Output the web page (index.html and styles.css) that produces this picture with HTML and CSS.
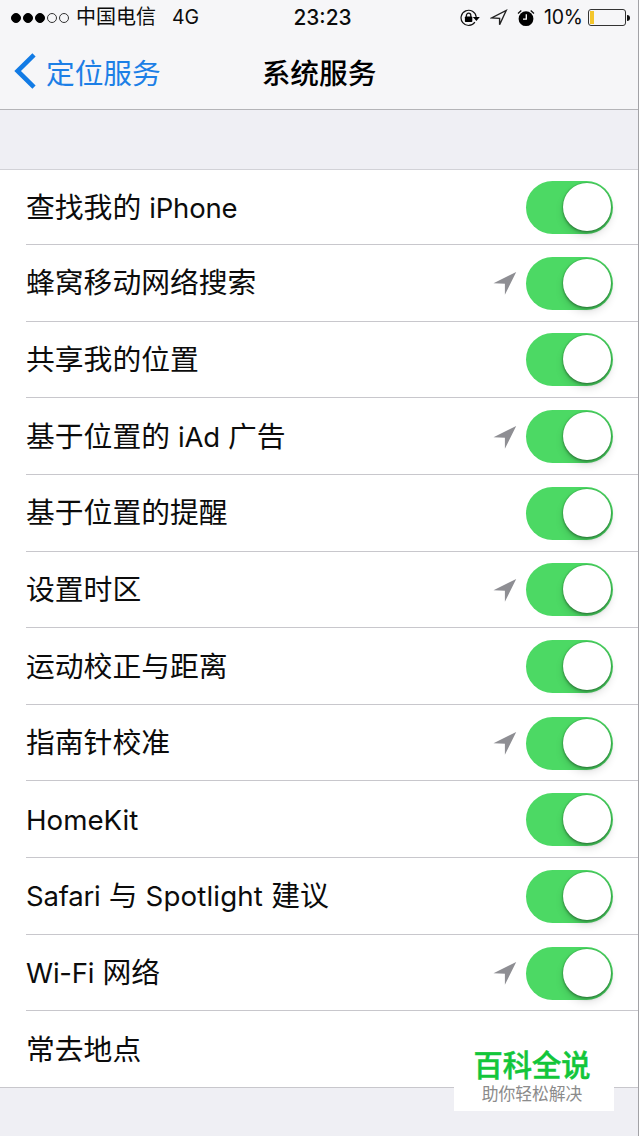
FILE: index.html
```
<!DOCTYPE html>
<html lang="zh-CN">
<head>
<meta charset="utf-8">
<title>系统服务</title>
<link rel="stylesheet" href="styles.css">
</head>
<body>
<svg class="defs" aria-hidden="true"><symbol id="arrow" viewBox="0 0 24 24"><path d="M23.2 1 11.9 23.8V12.7L.5 12.3Z"/></symbol></svg>
<main class="screen">
<header class="header">
<div class="status">
<div class="signal"><i class="on"></i><i class="on"></i><i class="on"></i><i></i><i></i></div>
<span class="carrier">中国电信</span><span class="network">4G</span>
<time class="time">23:23</time>
<div class="indicators">
<svg class="lock" viewBox="0 0 20 18"><path d="M14.9 13.2A7.6 7.6 0 1 1 16.2 8" fill="none" stroke="#111" stroke-width="1.2"/><path d="M12.8 8h7l-3.4 4z"/><rect x="4.9" y="7.6" width="7.4" height="5.4" rx=".7"/><path d="M6.4 8V6.4a2.2 2.2 0 0 1 4.4 0V8" fill="none" stroke="#111" stroke-width="1.3"/></svg>
<svg class="gps" viewBox="0 0 18 18"><path d="M16.2 1.5 9.6 15.8V9.4L1.6 8.9Z" fill="none" stroke="#222" stroke-width="1.4"/></svg>
<svg class="alarm" viewBox="0 0 18 18"><circle cx="9" cy="9.7" r="7.4"/><path d="M1 4.4 4.3 1.4M17 4.4 13.7 1.4" fill="none" stroke="#111" stroke-width="1.3"/><path d="M9.3 5.2v5H6" fill="none" stroke="#fff" stroke-width="1.3"/></svg>
<span class="percent">10%</span>
<span class="battery"><i></i></span><span class="cap"></span>
</div>
</div>
<nav class="nav">
<a class="back"><svg viewBox="0 0 22 36"><path d="M20 1.8 3.6 18 20 34.2" fill="none" stroke="#127be5" stroke-width="4.6"/></svg><span>定位服务</span></a>
<h1>系统服务</h1>
</nav>
</header>
<section class="list">
<div class="row"><span class="label">查找我的 <b class="tight">iPhone</b></span><span class="switch"></span></div>
<div class="row"><span class="label">蜂窝移动网络搜索</span><svg class="arrow"><use href="#arrow"/></svg><span class="switch"></span></div>
<div class="row"><span class="label">共享我的位置</span><span class="switch"></span></div>
<div class="row"><span class="label">基于位置的 <b class="tight">iAd</b> 广告</span><svg class="arrow"><use href="#arrow"/></svg><span class="switch"></span></div>
<div class="row"><span class="label">基于位置的提醒</span><span class="switch"></span></div>
<div class="row"><span class="label">设置时区</span><svg class="arrow"><use href="#arrow"/></svg><span class="switch"></span></div>
<div class="row"><span class="label">运动校正与距离</span><span class="switch"></span></div>
<div class="row"><span class="label">指南针校准</span><svg class="arrow"><use href="#arrow"/></svg><span class="switch"></span></div>
<div class="row"><span class="label"><b>HomeKit</b></span><span class="switch"></span></div>
<div class="row"><span class="label"><b class="tight">Safari</b> 与 <b class="wide">Spotlight</b> 建议</span><span class="switch"></span></div>
<div class="row"><span class="label"><b class="tight">Wi-Fi</b> 网络</span><svg class="arrow"><use href="#arrow"/></svg><span class="switch"></span></div>
<div class="row"><span class="label">常去地点</span></div>
</section>
<aside class="badge"><strong>百科全说</strong><span>助你轻松解决</span></aside>
</main>
</body>
</html>
```
FILE: styles.css
```
* { box-sizing: border-box; }
body { margin: 0; background: #efeff4; color: #0c0c0c; font-family: Inter, "Noto Sans CJK SC", sans-serif; }
.defs { position: absolute; width: 0; height: 0; }
.screen { position: relative; width: 639px; height: 1136px; overflow: hidden; border-right: 1px solid #a2a2a6; }
.header { height: 110px; background: #f6f6f8; border-bottom: 1px solid #b4b4b8; }
.status { position: relative; height: 35px; display: flex; align-items: center; padding-left: 11px; font-size: 19px; line-height: 35px; }
.signal { display: flex; gap: 2px; }
.signal i { width: 10px; height: 10px; border: 1px solid #333; border-radius: 50%; }
.signal .on { background: #000; border-color: #000; }
.carrier { margin-left: 7px; font-size: 20px; }
.network { margin-left: 16px; font-size: 19.5px; }
.time { position: absolute; left: 0; right: 0; text-align: center; padding-left: 7px; font-size: 20.8px; font-weight: 500; }
.indicators { display: flex; align-items: center; margin-left: auto; padding-right: 8px; }
.lock { width: 20px; height: 18px; }
.gps { width: 18px; height: 18px; margin-left: 10px; }
.alarm { width: 18px; height: 18px; margin-left: 9px; }
.percent { margin-left: 9px; width: 39px; margin-right: 5px; white-space: nowrap; font-size: 19.5px; letter-spacing: -.3px; }
.battery { width: 38px; height: 17px; border: 1px solid #333; border-radius: 3px; padding: 1px; }
.battery i { display: block; width: 4px; height: 13px; background: #f4c62c; }
.cap { width: 3px; height: 6px; margin-left: 1px; background: #111; border-radius: 0 3px 3px 0; }
.nav { height: 73px; display: grid; grid-template-columns: 1fr auto 1fr; align-items: center; padding-bottom: 1px; }
.back { display: flex; align-items: center; padding-left: 14px; color: #1c7fe6; font-size: 28.7px; }
.back svg { width: 22px; height: 36px; margin-right: 10px; }
.nav h1 { margin: 0; font-size: 28.7px; font-weight: 500; color: #000; }
.list { margin-top: 59px; height: 919px; background: #fff; border-top: 1px solid #d2d2d7; border-bottom: 1px solid #c8c7cc; display: grid; grid-template-rows: 75px repeat(10, 76.65px) 1fr; }
.row { margin-left: 26px; padding: 1px 25px 0 0; display: flex; align-items: center; border-bottom: 1px solid #c8c7cc; }
.row:last-child { border: 0; }
.label { flex: 1; font-size: 28.8px; line-height: 40px; white-space: pre; }
.label b { font-weight: 400; font-size: 27.7px; }
.label .tight { font-size: 27.5px; letter-spacing: -.2px; }
.label .wide { letter-spacing: .15px; }
.arrow { width: 24px; height: 24px; margin-right: 9px; fill: #8e8e93; }
.switch { width: 87px; height: 53px; padding: 2px; border-radius: 27px; background: #4cd964; display: flex; justify-content: flex-end; }
.switch::after { content: ""; width: 48px; height: 48px; border-radius: 50%; background: #fff; box-shadow: 0 2px 3px rgba(0,0,0,.28), 0 5px 9px rgba(0,0,0,.12), 0 0 1px 1px rgba(0,60,10,.15); }
.badge { position: absolute; left: 454px; top: 1035px; width: 160px; height: 76px; background: #fff; display: flex; flex-direction: column; align-items: center; padding: 14px 4px 0 0; }
.badge strong { font-size: 29.3px; line-height: 34px; font-weight: 500; color: #12c63a; -webkit-text-stroke: .5px #12c63a; }
.badge span { font-size: 16.8px; line-height: 22px; color: #8b8b8b; }
```
